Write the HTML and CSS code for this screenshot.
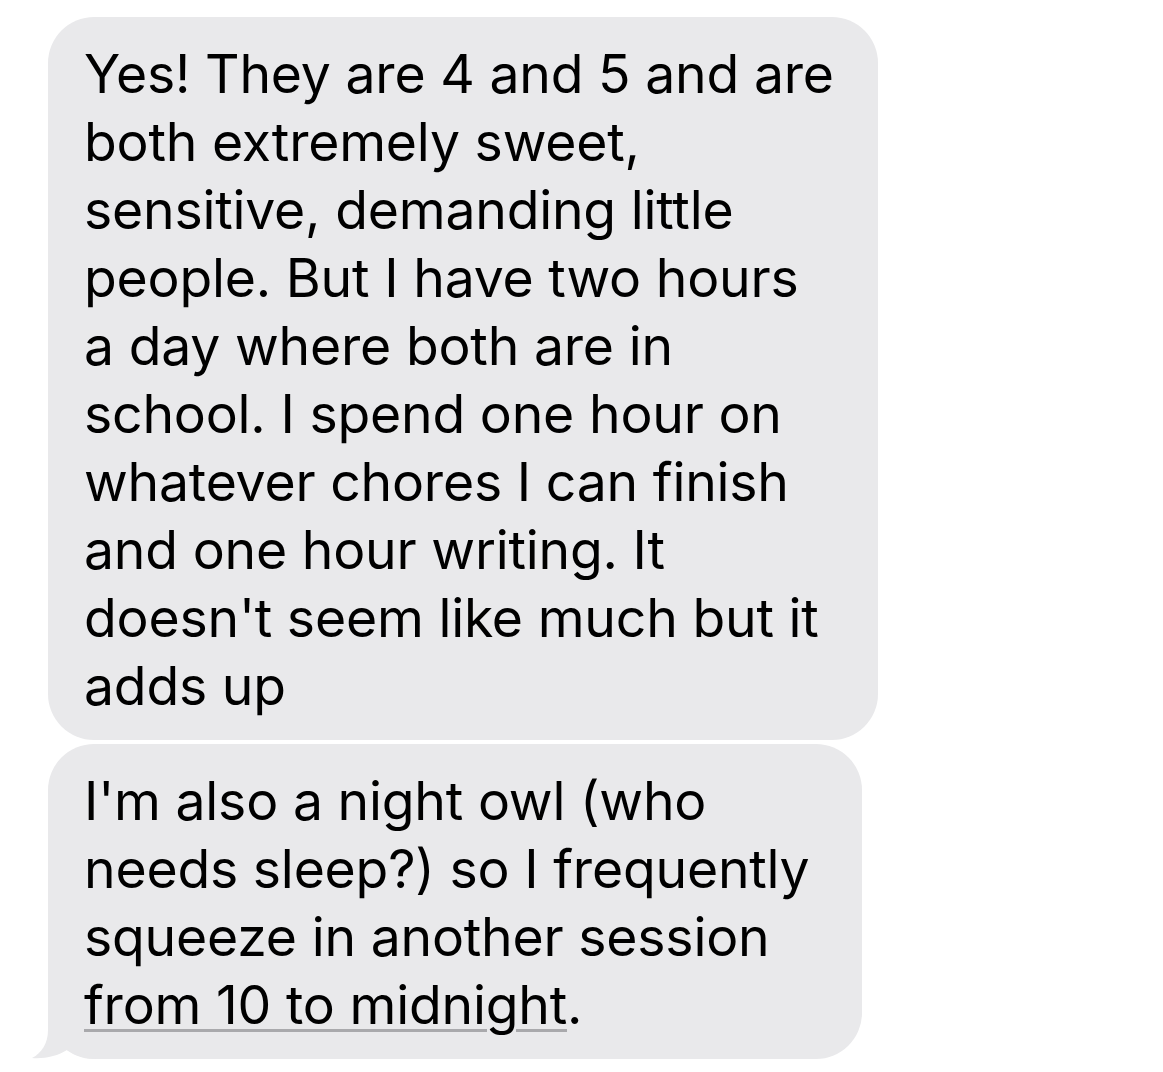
FILE: index.html
```html
<!DOCTYPE html>
<html lang="en">
<head>
<meta charset="utf-8">
<title>Messages</title>
<link rel="stylesheet" href="styles.css">
</head>
<body>
<main class="thread">
  <div class="bubble bubble--first">
    <p class="msg">Yes! They are 4 and 5 and are<br>both extremely sweet,<br>sensitive, demanding little<br>people. But I have two hours<br>a day where both are in<br>school. I spend one hour on<br>whatever chores I can finish<br>and one hour writing. It<br>doesn't seem like much but it<br>adds up</p>
  </div>
  <div class="bubble bubble--last">
    <p class="msg">I'm also a night owl (who<br>needs sleep?) so I frequently<br>squeeze in another session<br><span class="link">from 10 to midnight</span>.</p>
    <svg class="tail" width="65" height="48" viewBox="0 0 65 48" aria-hidden="true">
      <path d="M16 0 L16 19 C16 32 10 42 0 47 C12 48 26 45 35 39 C44 45 54 48 65 48 L65 0 Z" fill="#e9e9eb"/>
    </svg>
  </div>
</main>
</body>
</html>
```
FILE: styles.css
```css
html, body {
  margin: 0;
  padding: 0;
  background: #ffffff;
}

.thread {
  display: flex;
  flex-direction: column;
  align-items: flex-start;
  gap: 4px;
  padding: 17px 0 0 48px;
}

.bubble {
  position: relative;
  background: #e9e9eb;
  border-radius: 46px;
  padding: 23px 20px 20px 36px;
  box-sizing: border-box;
}

.bubble--first {
  width: 830px;
}

.bubble--last {
  width: 814px;
}

.msg {
  position: relative;
  z-index: 1;
  margin: 0;
  font-family: Inter, "Noto Sans", sans-serif;
  font-size: 53.5px;
  line-height: 68px;
  color: #000000;
  letter-spacing: -0.2px;
}

.link {
  text-decoration: underline;
  text-decoration-color: #a9a9ac;
  text-decoration-thickness: 3px;
  text-underline-offset: 5px;
  text-decoration-skip-ink: auto;
}

.tail {
  position: absolute;
  left: -16px;
  bottom: 0;
}
```
